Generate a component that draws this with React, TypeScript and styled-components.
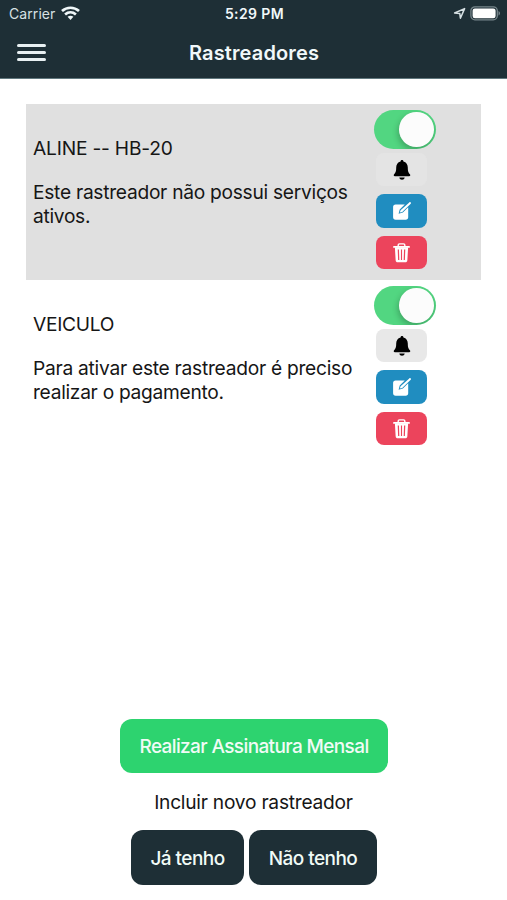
import React from "react";
import styled, { createGlobalStyle } from "styled-components";

const GlobalStyle = createGlobalStyle`
  * { box-sizing: border-box; }
  html, body { margin: 0; background: #fff; }
  body { font-family: Inter, "Liberation Sans", sans-serif; color: #161616; }
  button { font: inherit; border: 0; padding: 0; }
  p, h1, h2 { margin: 0; font-weight: 400; }
`;

const Screen = styled.div`
  display: flex;
  flex-direction: column;
  height: 900px;
  width: 507px;
`;

const Header = styled.header`
  height: 79px;
  background: #1e2f36;
  color: #f1f8fa;
  border-bottom: 1px solid #60777d;
`;

const StatusBar = styled.div`
  display: grid;
  grid-template-columns: 1fr auto 1fr;
  align-items: center;
  height: 27px;
  padding: 0 7px 0 9px;
  line-height: 18px;
`;

const Carrier = styled.div`
  display: flex;
  align-items: center;
  gap: 6px;
  font-size: 14px;
  letter-spacing: 0.08px;
  color: #d7e1e4;
`;

const Clock = styled.div`
  font-size: 14px;
  font-weight: 600;
  letter-spacing: 0.4px;
`;

const StatusIcons = styled.div`
  display: flex;
  justify-content: flex-end;
  align-items: center;
  gap: 4px;
`;

const NavBar = styled.div`
  display: grid;
  grid-template-columns: 60px 1fr 60px;
  align-items: center;
  height: 51px;
`;

const MenuButton = styled.button`
  display: flex;
  flex-direction: column;
  gap: 4.5px;
  width: 29px;
  margin-left: 16.5px;
  background: none;
`;

const MenuLine = styled.span`
  height: 2.8px;
  border-radius: 2px;
  background: #e8f0f2;
`;

const Title = styled.h1`
  padding-left: 1px;
  text-align: center;
  font-size: 20px;
  font-weight: 600;
  line-height: 24px;
  letter-spacing: 0.13px;
`;

const List = styled.main`
  flex: 1;
  padding: 25px 26px 0;
`;

const Tracker = styled.section<{ $shaded?: boolean }>`
  display: flex;
  height: 176px;
  padding-left: 7px;
  background: ${(p) => (p.$shaded ? "#e0e0e0" : "#fff")};
`;

const Details = styled.div`
  width: 340.5px;
  padding-top: 32px;
  font-size: 19.2px;
  line-height: 24.4px;
`;

const Name = styled.h2<{ $spacing: number }>`
  font-size: inherit;
  letter-spacing: ${(p) => p.$spacing}px;
  margin-bottom: 19.6px;
`;

const Line = styled.p<{ $spacing: number }>`
  white-space: nowrap;
  letter-spacing: ${(p) => p.$spacing}px;
`;

const Controls = styled.div`
  display: flex;
  flex-direction: column;
  padding-top: 5.5px;
`;

const Toggle = styled.button`
  display: flex;
  justify-content: flex-end;
  width: 62.5px;
  height: 39.5px;
  padding: 2.5px;
  border-radius: 20px;
  background: #52d681;
  overflow: hidden;
`;

const Knob = styled.span`
  width: 34.5px;
  height: 34.5px;
  border-radius: 50%;
  background: #fcfcfc;
  box-shadow: -1px 3px 6px rgba(0, 0, 0, 0.24);
`;

const Actions = styled.div`
  display: flex;
  flex-direction: column;
  gap: 8px;
  margin: 3.5px 0 0 2.5px;
`;

const Action = styled.button<{ $bg: string; $fg: string }>`
  display: flex;
  align-items: center;
  justify-content: center;
  width: 51px;
  height: 33.5px;
  padding-top: 1px;
  border-radius: 8px;
  background: ${(p) => p.$bg};
  color: ${(p) => p.$fg};
`;

const Footer = styled.footer`
  display: flex;
  flex-direction: column;
  align-items: center;
  padding-bottom: 15.5px;
`;

const Button = styled.button<{ $bg: string; $width: number; $spacing: number }>`
  width: ${(p) => p.$width}px;
  height: 54.5px;
  padding: 2px 0 0 1px;
  border-radius: 12px;
  background: ${(p) => p.$bg};
  color: #f1fbf6;
  font-size: 19px;
  font-weight: 500;
  white-space: nowrap;
  letter-spacing: ${(p) => p.$spacing}px;
`;

const Prompt = styled.p`
  margin: 17px 0 16px;
  font-size: 19.2px;
  line-height: 24px;
  letter-spacing: -0.25px;
`;

const Choices = styled.div`
  display: flex;
  gap: 5px;
`;

const WifiIcon = () => (
  <svg width="19" height="15" viewBox="0 0 19 15" fill="none" stroke="#f1f8fa" strokeWidth="2.7">
    <path d="M1 5.1C5.9.6 13.1.6 18 5.1" />
    <path d="M4.1 8.5c3.2-2.8 7.6-2.8 10.8 0" />
    <path d="M6.6 10.8c1.8-1.4 4-1.4 5.8 0L9.5 14z" fill="#f1f8fa" stroke="none" />
  </svg>
);

const LocationIcon = () => (
  <svg width="13" height="13" viewBox="0 0 13 13" fill="none" stroke="#d7e1e4" strokeWidth="1.5" strokeLinejoin="round">
    <path d="M1.6 6 11.6 1.6 7.4 11.2 6.8 6.5z" />
  </svg>
);

const BatteryIcon = () => (
  <svg width="30" height="15" viewBox="0 0 30 15">
    <rect x=".9" y=".8" width="26.4" height="13" rx="4" fill="none" stroke="#77868b" strokeWidth="1.3" />
    <rect x="2.6" y="2.5" width="23" height="9.7" rx="2.3" fill="#fff" />
    <path d="M28.5 5v4.6c2-.9 2-3.7 0-4.6" fill="#77868b" />
  </svg>
);

const BellIcon = () => (
  <svg width="18" height="20" viewBox="0 0 18 20" fill="currentColor">
    <path d="M9 0c.9 0 1.4.6 1.4 1.4 3 .7 4.4 3 4.4 6.2 0 4.2.8 5.4 2.1 6.6.8.8.4 2-.8 2H1.9c-1.2 0-1.6-1.2-.8-2 1.3-1.2 2.1-2.4 2.1-6.6 0-3.2 1.4-5.5 4.4-6.2C7.6.6 8.1 0 9 0" />
    <path d="M6.3 17.5h5.4C11.4 19 10.4 19.7 9 19.7s-2.4-.7-2.7-2.2" />
  </svg>
);

const EditIcon = () => (
  <svg width="20" height="20" viewBox="0 0 20 20">
    <path d="M3.6 3.5h9.2L7.7 8.6l-1.1 4.1 4.3-1.1 5.3-5.3v9.9c0 1.6-.9 2.5-2.5 2.5H3.6c-1.6 0-2.5-.9-2.5-2.5V6c0-1.6.9-2.5 2.5-2.5" fill="currentColor" />
    <path d="M17.3 1.4c.4-.4 1-.4 1.4 0s.4 1 0 1.4l-8.5 8.1-2.4.7.8-2.3z" fill="currentColor" />
  </svg>
);

const TrashIcon = () => (
  <svg width="17" height="20" viewBox="0 0 18 21" fill="none" stroke="currentColor">
    <path d="M5.5 3V2Q5.5.8 6.8.8h4.4q1.3 0 1.3 1.2v1" strokeWidth="1.5" />
    <path d="M1 4.1h16" strokeWidth="1.9" strokeLinecap="round" />
    <path fill="currentColor" stroke="none" fillRule="evenodd" d="M2 4.5h14l-.8 13.7c-.1 1.4-.9 2.2-2.2 2.2H5c-1.3 0-2.1-.8-2.2-2.2zm3 2.2.4 11.2h1.3L6.3 6.7zm3.4 0v11.2h1.2V6.7zm3.3 0-.4 11.2h1.3L13 6.7z" />
  </svg>
);

type TextLine = { text: string; spacing: number };

const trackers: { name: TextLine; lines: TextLine[]; shaded?: boolean }[] = [
  {
    name: { text: "ALINE -- HB-20", spacing: -0.2 },
    lines: [
      { text: "Este rastreador não possui serviços", spacing: -0.28 },
      { text: "ativos.", spacing: -0.3 },
    ],
    shaded: true,
  },
  {
    name: { text: "VEICULO", spacing: -0.3 },
    lines: [
      { text: "Para ativar este rastreador é preciso", spacing: -0.27 },
      { text: "realizar o pagamento.", spacing: -0.3 },
    ],
  },
];

export default function App() {
  return (
    <>
      <GlobalStyle />
      <Screen>
        <Header>
          <StatusBar>
            <Carrier>Carrier <WifiIcon /></Carrier>
            <Clock>5:29 PM</Clock>
            <StatusIcons><LocationIcon /><BatteryIcon /></StatusIcons>
          </StatusBar>
          <NavBar>
            <MenuButton aria-label="Menu"><MenuLine /><MenuLine /><MenuLine /></MenuButton>
            <Title>Rastreadores</Title>
          </NavBar>
        </Header>
        <List>
          {trackers.map((t) => (
            <Tracker key={t.name.text} $shaded={t.shaded}>
              <Details>
                <Name $spacing={t.name.spacing}>{t.name.text}</Name>
                {t.lines.map((l) => <Line key={l.text} $spacing={l.spacing}>{l.text}</Line>)}
              </Details>
              <Controls>
                <Toggle role="switch" aria-checked="true"><Knob /></Toggle>
                <Actions>
                  <Action $bg={t.shaded ? "#e4e4e4" : "#e8e8e8"} $fg="#000" aria-label="Alertas"><BellIcon /></Action>
                  <Action $bg="#208dc0" $fg="#fff" aria-label="Editar"><EditIcon /></Action>
                  <Action $bg="#ec445c" $fg="#fff" aria-label="Excluir"><TrashIcon /></Action>
                </Actions>
              </Controls>
            </Tracker>
          ))}
        </List>
        <Footer>
          <Button $bg="#2dd36f" $width={268} $spacing={-0.62}>Realizar Assinatura Mensal</Button>
          <Prompt>Incluir novo rastreador</Prompt>
          <Choices>
            <Button $bg="#1e2f36" $width={113} $spacing={-0.55}>Já tenho</Button>
            <Button $bg="#1e2f36" $width={128} $spacing={-0.55}>Não tenho</Button>
          </Choices>
        </Footer>
      </Screen>
    </>
  );
}
